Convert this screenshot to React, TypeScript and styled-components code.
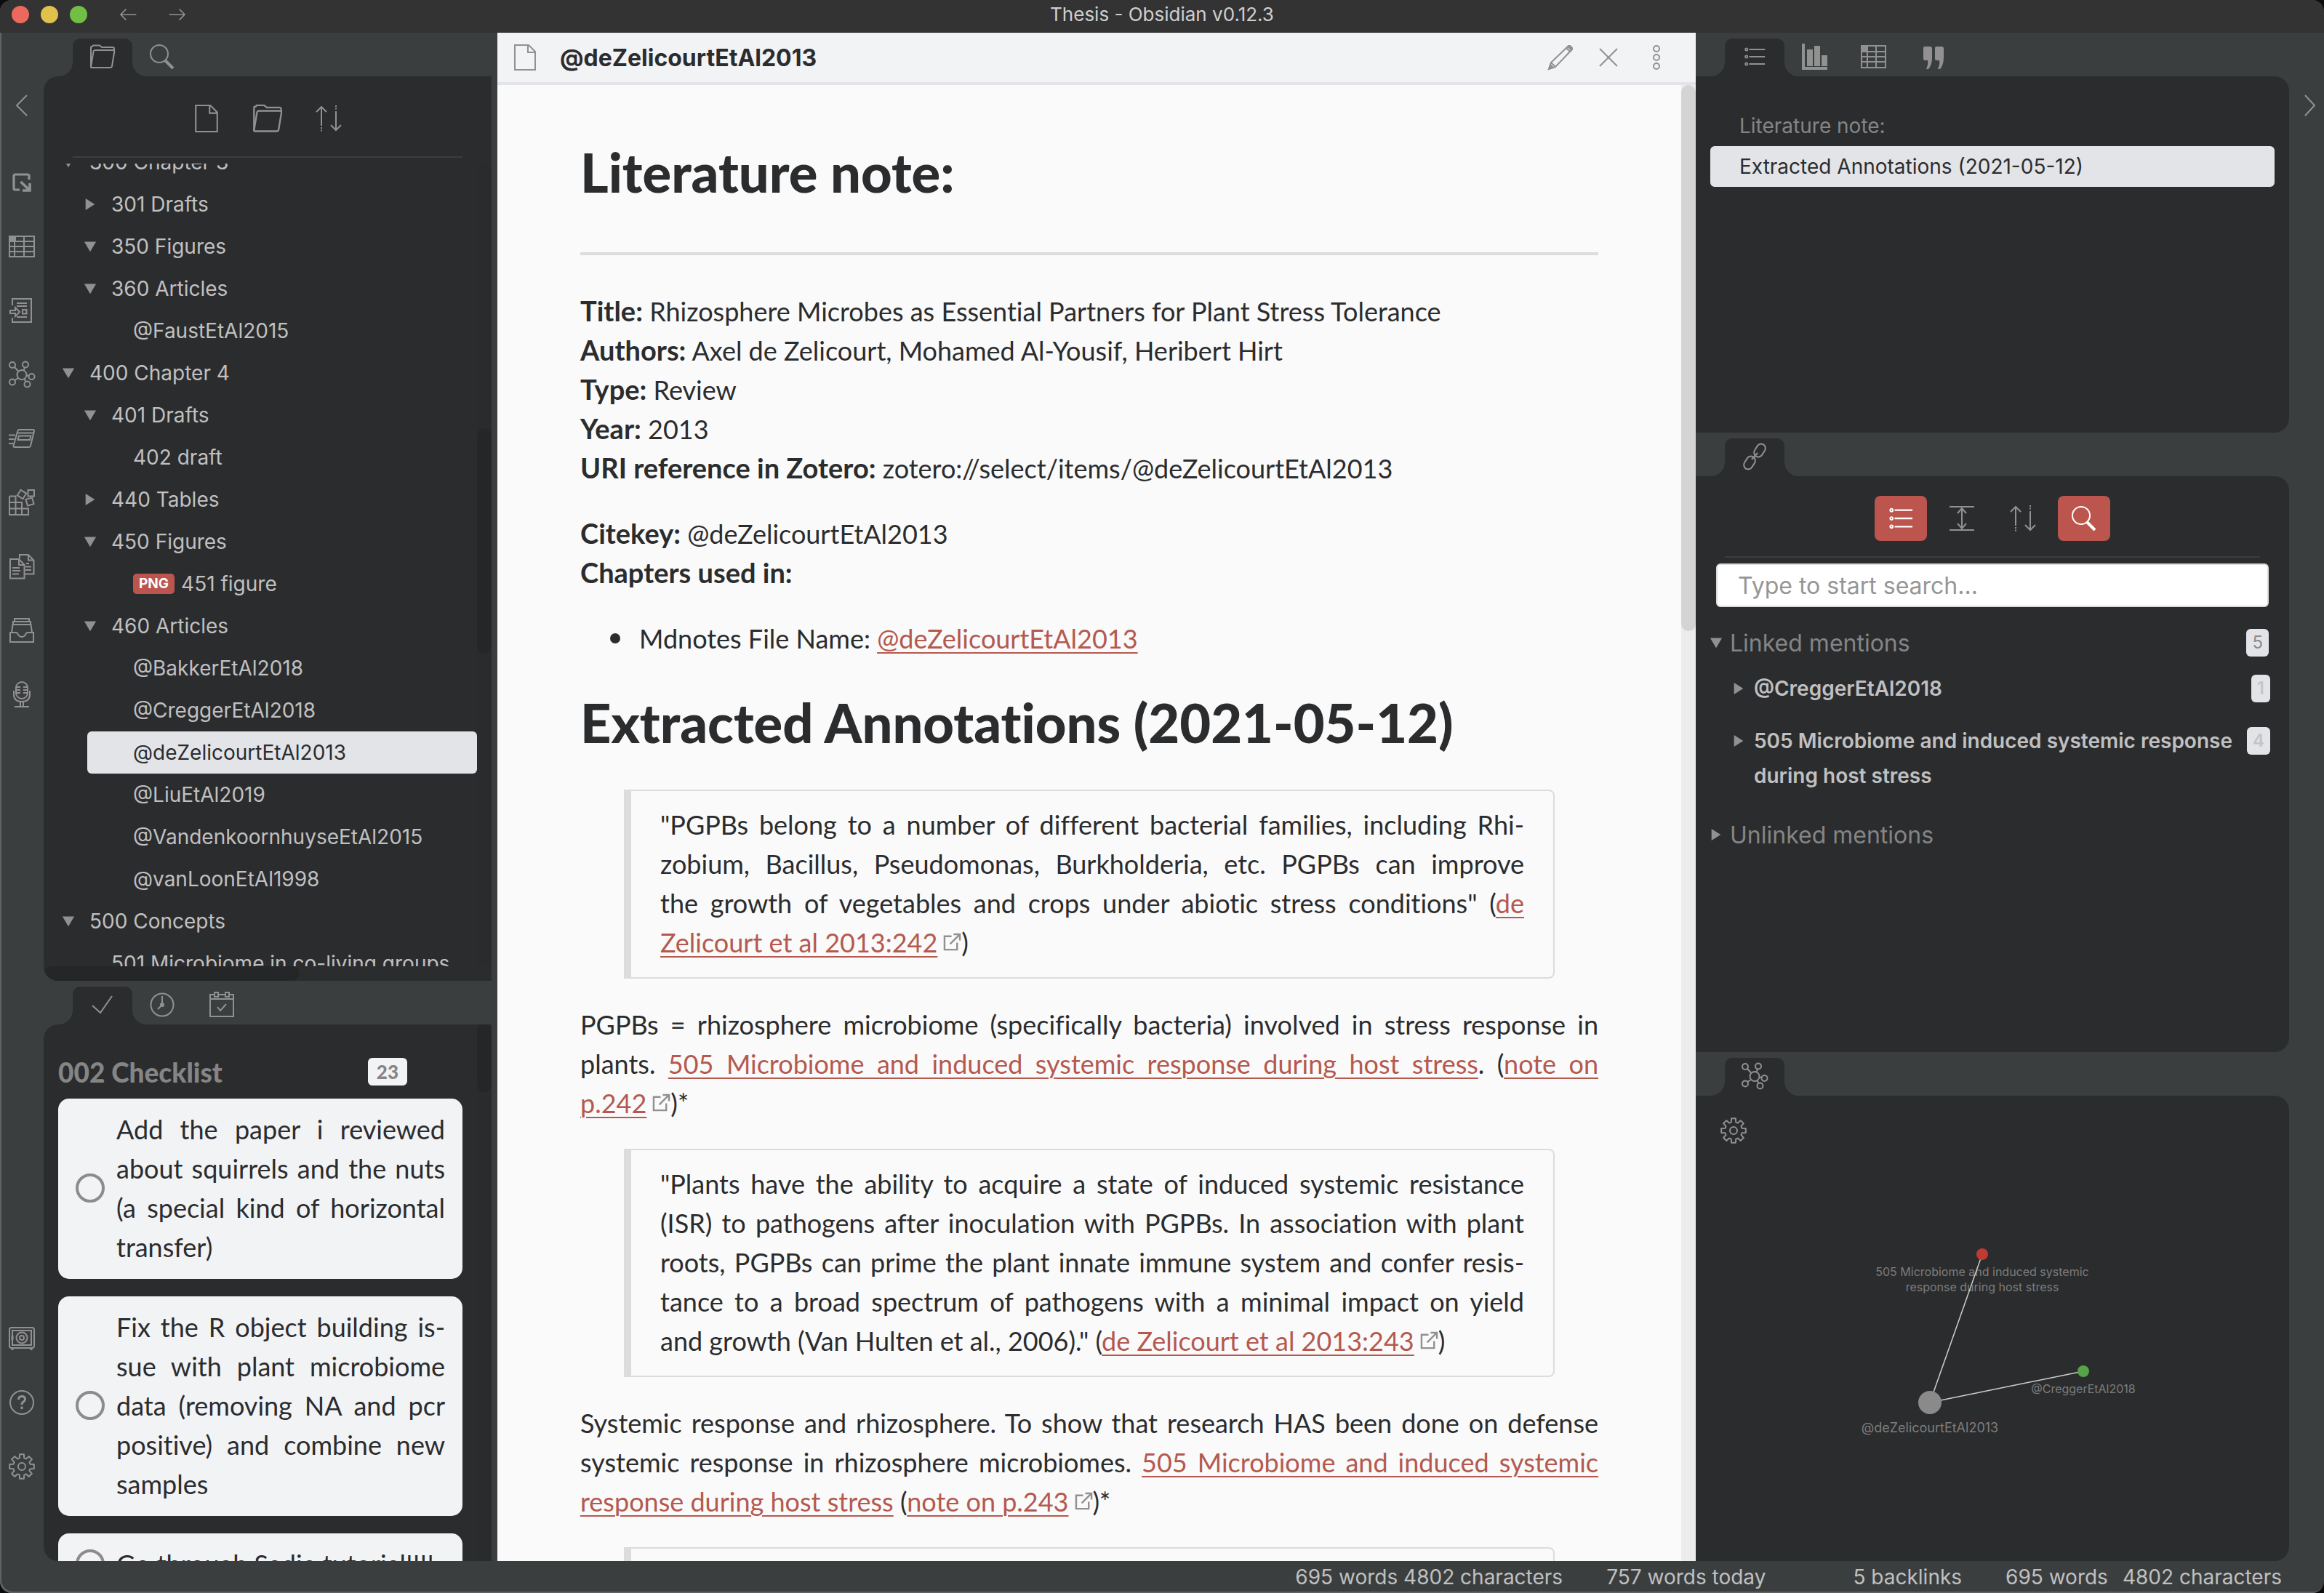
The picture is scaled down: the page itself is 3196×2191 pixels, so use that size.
import React, { useLayoutEffect, useRef } from "react";
import styled, { createGlobalStyle, css } from "styled-components";

const color = {
  title: "#333333",
  frame: "#3b3e3f",
  panel: "#2b2c2e",
  thumb: "#252628",
  rule: "#3c3d3f",
  edge: "#606263",
  icon: "#919191",
  text: "#c0c0c0",
  faint: "#858585",
  light: "#e3e4e8",
  header: "#f2f3f5",
  page: "#fafafa",
  line: "#dcdcdc",
  ink: "#2b2c2e",
  red: "#bb554e",
  link: "#b5594f",
};
const ui = `Inter, "Liberation Sans", sans-serif`;
const prose = `Lato, "Open Sans", sans-serif`;

const GlobalStyle = createGlobalStyle`
  *, *::before, *::after { box-sizing: border-box; }
  html, body, #root { height: 100%; }
  body { margin: 0; background: #0c0c0c; font-family: ${ui}; overflow: hidden; }
  button { border: 0; padding: 0; background: none; font: inherit; color: inherit; cursor: pointer; }
  ul, h1, h2, p, blockquote { margin: 0; padding: 0; }
  ul { list-style: none; }
`;

/* ---------- icons ---------- */

const Glyph = styled.svg<{ $w?: number }>`
  display: block;
  flex: none;
  fill: none;
  stroke: currentColor;
  stroke-width: ${(p) => p.$w ?? 2};
  overflow: visible;
`;

type IconProps = { size?: number };
type ArtProps = IconProps & { w?: number; children: React.ReactNode };
const Art = ({ size = 36, w, children }: ArtProps) => (
  <Glyph width={size} height={size} viewBox="0 0 36 36" $w={w} aria-hidden="true">
    {children}
  </Glyph>
);

const FolderIcon = ({ size }: IconProps) => (
  <Art size={size}>
    <path d="M2 32V5q0-1 1-1h1l1-1.500h9l3 2.500h15q2 0 2 2v3" />
    <path d="M2 32L5.500 11q.5-2 2.500-2h24.500q2 0 1.800 2l-3.300 20q-.5 2-2.500 2H3q-1.200 0-1-1z" />
  </Art>
);
const SearchIcon = ({ size, w }: IconProps & { w?: number }) => (
  <Art size={size} w={w}>
    <circle cx="14" cy="14" r="12" />
    <path d="M22.500 23.500L33 34" strokeWidth="4" />
  </Art>
);
const FileIcon = ({ size }: IconProps) => (
  <Art size={size}>
    <path d="M4 1h19l9 9v25H4zM22 1v10h10" />
  </Art>
);
const SortIcon = ({ size }: IconProps) => (
  <Art size={size}>
    <path d="M8 2v26M1 9l7-7 7 7M28 8v25M21 27l7 7 7-7" />
    <path d="M8 30v6M28 0v7" strokeDasharray="2 1.500" />
  </Art>
);
const ChevronLeft = () => (
  <Art>
    <path d="M25 4L11 18l14 14" />
  </Art>
);
const ChevronRight = () => (
  <Art>
    <path d="M11 4l13 14-13 14" />
  </Art>
);
const ArrowIcon = ({ flip }: { flip?: boolean }) => (
  <Art size={24}>
    <path d={flip ? "M1 18h32M22 7l11 11-11 11" : "M35 18H3M14 7L3 18l11 11"} strokeWidth="2.400" />
  </Art>
);
const SwitchIcon = () => (
  <Art w={3.2}>
    <path d="M28 14V9q0-2-2-2H9Q7 7 7 9v17q0 2 2 2h6" />
    <path d="M16.500 17L29 29M29 19v10H19" strokeWidth="3.600" />
  </Art>
);
const TableIcon = ({ square }: { square?: boolean }) => (
  <Art>
    <path d={square ? "M1 3h33v30H1zM1 11h33M1 18h33M1 25h33M9 3v30M21 3v30" : "M1 4h34v28H1zM1 11h34M1 18h34M1 25h34M8 4v28M21 4v28"} />
    <path d="M1 4h8v7H1z" fill="currentColor" />
  </Art>
);
const ImportIcon = () => (
  <Art>
    <path d="M5 11V2h26v32H5v-6M11 8h14M11 12h14M11 27h14" />
    <path d="M2 18h7v-4l6 6-6 6v-4H2zM19 17h5.500v5.500H19z" />
  </Art>
);
const GraphIcon = () => (
  <Art>
    <circle cx="18" cy="18.500" r="6.500" />
    <circle cx="5" cy="5" r="4" />
    <circle cx="23" cy="4.500" r="4" />
    <circle cx="31.500" cy="21" r="4" />
    <circle cx="25.500" cy="31.500" r="4" />
    <circle cx="5" cy="28.500" r="4" />
    <path d="M8 8l5 5.500M22 8.500l-1.500 4M24.500 19.500l3 .5M21.500 24l2 4M8 26l5-3" />
  </Art>
);
const CardsIcon = () => (
  <Art>
    <path d="M12 9q.5-3 2.500-3h19q2 0 1.500 2l-5 20q-.5 2-2.500 2H8q-2 0-1.500-2zM11.500 10.500h23" />
    <path d="M14 14.500h16.500l-1.500 5.500H12.500zM0 13.500h9M0 19h7.500M0 25h6" />
  </Art>
);
const BlocksIcon = () => (
  <Art>
    <path d="M1 9.500h8.500V35M1 9.500V35h26v-8.500H1M1 18h17v17" />
    <path d="M26.500 1H35v8.500h-8.500z" />
    <rect x="13.500" y="2.500" width="9" height="9" transform="rotate(32 18 7)" />
    <rect x="24.500" y="12.500" width="9" height="9" transform="rotate(-16 29 17)" />
  </Art>
);
const CopyDocsIcon = () => (
  <Art>
    <path d="M2 8h12l7.500 8v18.500H2zM14 8v8h7.500M5 20h10M5 24h11M5 28.500h9" />
    <path d="M15 7V2h12l7.500 8v18.500H22M27 2v7.500h7M24 14h4M23 18.500h8M23 23h8" />
  </Art>
);
const InboxIcon = () => (
  <Art>
    <path d="M2 21h8q2 0 3 3 2 3 5 3t5-3q1-3 3-3h8v13H2z" />
    <path d="M4 21l1.500-11h25L32 21M6 10V6h24v4M8 6V2h20v4" />
  </Art>
);
const MicIcon = () => (
  <Art>
    <rect x="10" y="1" width="16" height="23" rx="8" />
    <path d="M7 13v5q0 10 11 10t11-10v-5M16 28v6M20 28v6M8 35h20M11 8h5M11 12h5M11 16h5M20 8h5M20 12h5M20 16h5" />
  </Art>
);
const SafeIcon = () => (
  <Art>
    <rect x="1" y="3" width="34" height="28" rx="3" />
    <rect x="5" y="7" width="26" height="20" />
    <circle cx="18" cy="17" r="7.500" />
    <circle cx="18" cy="17" r="3" />
    <path d="M5 32v2M31 32v2M5 14v6" strokeWidth="3" />
  </Art>
);
const HelpIcon = () => (
  <Art>
    <circle cx="18" cy="18" r="16" />
    <path d="M13.500 14q0-4.500 4.500-4.500t4.500 4q0 2-2.300 3.500T18 21M18 23.500v3.500" strokeWidth="3" />
  </Art>
);
const gearPath = (() => {
  const pts: string[] = [];
  for (let i = 0; i < 8; i++) {
    const a = (i * Math.PI) / 4;
    [[-0.27, 12], [-0.17, 17], [0.17, 17], [0.27, 12]].forEach(([d, r]) =>
      pts.push(`${(18 + r * Math.sin(a + d)).toFixed(1)} ${(18 - r * Math.cos(a + d)).toFixed(1)}`)
    );
  }
  return `M${pts.join("L")}Z`;
})();
const GearIcon = () => (
  <Art>
    <path d={gearPath} strokeLinejoin="round" />
    <circle cx="18" cy="18" r="5" />
  </Art>
);
const CheckIcon = () => (
  <Art>
    <path d="M4 19l11 10L31 6" />
  </Art>
);
const ClockIcon = () => (
  <Art>
    <circle cx="18" cy="18" r="15.500" />
    <path d="M18 6v12l-6 6" />
    <circle cx="18" cy="18" r="2" fill="currentColor" />
  </Art>
);
const CalendarIcon = () => (
  <Art>
    <path d="M8 4H2v30h32V4h-6M14 4h8M2 10h32M12 21l4 5 8-9" />
    <path d="M8 1h5v6H8zM23 1h5v6h-5z" />
  </Art>
);
const ListIcon = ({ size }: IconProps) => (
  <Art size={size}>
    <circle cx="4.500" cy="6" r="2" />
    <circle cx="4.500" cy="18" r="2" />
    <circle cx="4.500" cy="30" r="2" />
    <path d="M9 6h26M9 18h26M9 30h26" strokeWidth="2.500" />
  </Art>
);
const ChartIcon = () => (
  <Art w={4}>
    <path d="M3 0v34h33" />
    <path d="M8 8h8v23H8zM18 3h8v28h-8zM28 16h8v15h-8z" fill="currentColor" stroke="none" />
  </Art>
);
const QuoteIcon = () => (
  <Art>
    <path d="M6 4h7q3 0 3 3v12q0 10-5 16H8q3-7 2-12H6q-2 0-2-2V6q0-2 2-2zM22 4h7q3 0 3 3v12q0 10-5 16h-3q3-7 2-12h-4q-2 0-2-2V6q0-2 2-2z" fill="currentColor" stroke="none" />
  </Art>
);
const LinkIcon = () => (
  <Art>
    <rect x="19" y="0" width="12" height="19" rx="6" transform="rotate(32 25 9.500)" />
    <rect x="5" y="17" width="12" height="19" rx="6" transform="rotate(32 11 26.500)" />
    <path d="M14 22l8-9" />
  </Art>
);
const ExpandIcon = () => (
  <Art>
    <path d="M1 2h34M1 34h34M18 5v26M12 11l6-7 6 7M12 25l6 7 6-7" />
  </Art>
);
const PencilIcon = () => (
  <Art>
    <path d="M2 34l3-9L28 3q2-2 4 0l1 1q2 2 0 4L11 31zM26 5l5 5M5 25l6 6" />
    <path d="M2 34l2-6 4 4zM28 3q2-2 4 0l1 1q2 2 0 4z" fill="currentColor" />
  </Art>
);
const CloseIcon = () => (
  <Art>
    <path d="M6 6l24 24M30 6L6 30" />
  </Art>
);
const DotsIcon = () => (
  <Art>
    <circle cx="18" cy="6" r="4" />
    <circle cx="18" cy="18" r="4" />
    <circle cx="18" cy="30" r="4" />
  </Art>
);

/* ---------- window frame ---------- */

const Window = styled.div`
  height: 100vh;
  display: flex;
  flex-direction: column;
  background: ${color.frame};
  border-radius: 16px;
  overflow: hidden;
  box-shadow: inset 2px -2px 0 ${color.edge};
`;
const TitleBar = styled.header`
  flex: none;
  height: 45px;
  padding: 0 16px 6px;
  display: grid;
  grid-template-columns: 1fr auto 1fr;
  align-items: center;
  background: ${color.title};
  color: #cfcfcf;
  font-size: 26px;
`;
const TitleControls = styled.div`
  display: flex;
  align-items: center;
  gap: 16px;
  color: ${color.icon};
`;
const Light = styled.button<{ $c: string }>`
  width: 24px;
  height: 24px;
  border-radius: 50%;
  background: ${(p) => p.$c};
`;
const NavArrow = styled.button`
  margin-left: 28px;
`;
const Body = styled.div`
  flex: 1;
  min-height: 0;
  display: flex;
`;
const Ribbon = styled.nav<{ $side: "left" | "right" }>`
  flex: none;
  width: ${(p) => (p.$side === "left" ? 60 : 48)}px;
  padding: ${(p) => (p.$side === "left" ? "82px 0 112px" : "82px 0 0 9px")};
  display: flex;
  flex-direction: column;
  align-items: center;
  gap: 52px;
  color: ${color.icon};
`;
const RibbonFirst = styled.button`
  margin-bottom: 18px;
`;
const RibbonBottom = styled.button`
  margin-top: auto;
`;

/* ---------- side panels ---------- */

const Side = styled.aside<{ $width: number }>`
  flex: none;
  width: ${(p) => p.$width}px;
  display: flex;
  flex-direction: column;
  min-height: 0;
`;
const Split = styled.section<{ $grow: number }>`
  flex: ${(p) => p.$grow} 1 0;
  min-height: 0;
  display: flex;
  flex-direction: column;
`;
const TabStrip = styled.div`
  flex: none;
  height: 60px;
  padding: 8px 40px 0;
  display: flex;
  color: ${color.icon};
`;
const Tab = styled.button<{ $active?: boolean }>`
  position: relative;
  width: 82px;
  height: 52px;
  padding-bottom: 2px;
  display: flex;
  align-items: center;
  justify-content: center;
  ${(p) =>
    p.$active &&
    css`
      background: ${color.panel};
      border-radius: 10px 10px 0 0;
      &::before,
      &::after {
        content: "";
        position: absolute;
        bottom: 0;
        width: 20px;
        height: 20px;
      }
      &::before {
        right: 100%;
        background: radial-gradient(circle at 0 0, transparent 20px, ${color.panel} 20px);
      }
      &::after {
        left: 100%;
        background: radial-gradient(circle at 100% 0, transparent 20px, ${color.panel} 20px);
      }
    `}
`;
const Panel = styled.div<{ $round: "left" | "right" }>`
  position: relative;
  flex: 1;
  min-height: 0;
  display: flex;
  flex-direction: column;
  overflow: hidden;
  background: ${color.panel};
  border-radius: ${(p) => (p.$round === "left" ? "20px 0 0 20px" : "0 20px 20px 0")};
`;
const NavHeader = styled.div`
  flex: none;
  margin: 0 40px 8px;
  padding: 27px 0 21px;
  display: flex;
  justify-content: center;
  gap: 12px;
  border-bottom: 2px solid ${color.rule};
  color: ${color.icon};
`;
const NavButton = styled.button<{ $on?: boolean }>`
  width: 72px;
  height: 62px;
  display: flex;
  align-items: center;
  justify-content: center;
  border-radius: 8px;
  background: ${(p) => (p.$on ? color.red : "none")};
  color: ${(p) => (p.$on ? "#ffffff" : "inherit")};
`;
const ScrollArea = styled.div`
  flex: 1;
  min-height: 0;
  display: grid;
  grid-template-columns: minmax(0, 1fr) 20px;
  grid-template-rows: minmax(0, 1fr);
`;
const Track = styled.div<{ $bg?: string }>`
  background: ${(p) => p.$bg ?? "#2a2b2d"};
`;
const Thumb = styled.div<{ $bg?: string; $before: number; $size: number }>`
  height: ${(p) => p.$size}%;
  transform: translateY(${(p) => (p.$before / p.$size) * 100}%);
  border-radius: 10px;
  background: ${(p) => p.$bg ?? color.thumb};
`;
const HTrack = styled.div`
  flex: none;
  height: 20px;
  margin-right: 20px;
`;
const HThumb = styled.div`
  width: 59%;
  height: 20px;
  border-radius: 10px;
  background: ${color.thumb};
`;

/* ---------- file tree ---------- */

const Tree = styled.ul`
  overflow: hidden;
  min-height: 0;
`;
const TreeRow = styled.li<{ $level: number; $selected?: boolean }>`
  height: 58px;
  margin-left: ${(p) => p.$level * 30}px;
  padding-left: 25px;
  display: flex;
  align-items: center;
  border-radius: 6px;
  font-size: 28px;
  white-space: nowrap;
  background: ${(p) => (p.$selected ? color.light : "none")};
  color: ${(p) => (p.$selected ? color.ink : color.text)};
`;
const Caret = styled.span<{ $open?: boolean; $hidden?: boolean }>`
  flex: none;
  width: 18px;
  height: 16px;
  margin-right: 20px;
  visibility: ${(p) => (p.$hidden ? "hidden" : "visible")};
  background: ${color.icon};
  clip-path: ${(p) => (p.$open ? "polygon(5% 10%, 95% 10%, 50% 95%)" : "polygon(15% 0, 85% 50%, 15% 100%)")};
`;
const FileTag = styled.span`
  height: 28px;
  margin-right: 9px;
  padding: 0 8px;
  border-radius: 5px;
  background: ${color.red};
  color: #ffffff;
  font-size: 19px;
  font-weight: 700;
  line-height: 28px;
`;

type Row = { text: string; level: number; kind: "open" | "closed" | "file"; tag?: string; selected?: boolean };
const files: Row[] = [
  { text: "300 Chapter 3", level: 0, kind: "open" },
  { text: "301 Drafts", level: 1, kind: "closed" },
  { text: "350 Figures", level: 1, kind: "open" },
  { text: "360 Articles", level: 1, kind: "open" },
  { text: "@FaustEtAl2015", level: 2, kind: "file" },
  { text: "400 Chapter 4", level: 0, kind: "open" },
  { text: "401 Drafts", level: 1, kind: "open" },
  { text: "402 draft", level: 2, kind: "file" },
  { text: "440 Tables", level: 1, kind: "closed" },
  { text: "450 Figures", level: 1, kind: "open" },
  { text: "451 figure", level: 2, kind: "file", tag: "PNG" },
  { text: "460 Articles", level: 1, kind: "open" },
  { text: "@BakkerEtAl2018", level: 2, kind: "file" },
  { text: "@CreggerEtAl2018", level: 2, kind: "file" },
  { text: "@deZelicourtEtAl2013", level: 2, kind: "file", selected: true },
  { text: "@LiuEtAl2019", level: 2, kind: "file" },
  { text: "@VandenkoornhuyseEtAl2015", level: 2, kind: "file" },
  { text: "@vanLoonEtAl1998", level: 2, kind: "file" },
  { text: "500 Concepts", level: 0, kind: "open" },
  { text: "501 Microbiome in co-living groups", level: 1, kind: "file" },
];

const TreeEnd = styled.li`
  height: 58px;
`;

function FileTree() {
  const ref = useRef<HTMLUListElement>(null);
  useLayoutEffect(() => {
    if (ref.current) ref.current.scrollTop = 31;
  }, []);
  return (
    <Tree ref={ref}>
      {files.map((f) => (
        <TreeRow key={f.text} $level={f.level} $selected={f.selected}>
          <Caret $open={f.kind === "open"} $hidden={f.kind === "file"} />
          {f.tag && <FileTag>{f.tag}</FileTag>}
          {f.text}
        </TreeRow>
      ))}
      <TreeEnd />
    </Tree>
  );
}

/* ---------- checklist ---------- */

const Checklist = styled.div`
  min-height: 0;
  overflow: hidden;
  padding: 38px 20px 0;
  font-family: ${prose};
  font-variant-ligatures: none;
`;
const ChecklistHead = styled.div`
  display: flex;
  align-items: center;
  justify-content: space-between;
  height: 54px;
  margin-bottom: 10px;
  padding-right: 76px;
  color: ${color.faint};
`;
const ChecklistTitle = styled.h2`
  font-size: 37px;
  font-weight: 900;
`;
const Count = styled.span`
  height: 38px;
  padding: 0 12px;
  border-radius: 6px;
  background: ${color.header};
  font-size: 26px;
  font-weight: 900;
  line-height: 38px;
`;
const Card = styled.label`
  display: flex;
  align-items: center;
  gap: 16px;
  margin-bottom: 24px;
  padding: 15px 24px 17px;
  border-radius: 15px;
  background: ${color.header};
  color: ${color.ink};
  font-size: 36px;
  line-height: 54px;
  text-align: justify;
`;
const Tick = styled.input`
  appearance: none;
  flex: none;
  width: 40px;
  height: 40px;
  margin: 0;
  border: 4px solid #8c8c8c;
  border-radius: 50%;
`;

const todos = [
  "Add the paper i reviewed about squirrels and the nuts (a special kind of horizontal transfer)",
  "Fix the R object building is\u00ADsue with plant microbiome data (removing NA and pcr positive) and combine new samples",
  "Go through Sadie tutorial!!!!",
];

/* ---------- note ---------- */

const Note = styled.main`
  flex: 1;
  min-width: 0;
  display: flex;
  flex-direction: column;
  margin-left: 8px;
  background: ${color.page};
`;
const NoteHeader = styled.div`
  flex: none;
  height: 72px;
  padding: 0 36px 0 20px;
  display: flex;
  align-items: center;
  border-bottom: 4px solid ${color.light};
  background: ${color.header};
  color: ${color.icon};
`;
const NoteName = styled.div`
  flex: 1;
  margin-left: 30px;
  color: ${color.ink};
  font-size: 32px;
  font-weight: 650;
`;
const NoteActions = styled.div`
  display: flex;
  gap: 30px;
`;
const Sheet = styled.article`
  min-height: 0;
  overflow: hidden;
  padding: 80px 114px 0;
  color: ${color.ink};
  font-family: ${prose};
  font-size: 36px;
  font-variant-ligatures: none;
  line-height: 54px;
  b {
    font-size: 38px;
    line-height: 1;
  }
`;
const Heading = styled.h1`
  font-size: 74px;
  font-weight: 900;
  line-height: 80px;
`;
const Rule = styled.hr`
  height: 4px;
  margin: 70px 0 50px;
  border: 0;
  background: ${color.line};
`;
const Para = styled.p`
  margin-bottom: 36px;
  text-align: justify;
`;
const Bullets = styled.ul`
  margin-bottom: 49px;
  padding-left: 41px;
`;
const Bullet = styled.li`
  display: flex;
  align-items: center;
  &::before {
    content: "";
    width: 14px;
    height: 14px;
    margin-right: 26px;
    border-radius: 50%;
    background: currentColor;
  }
`;
const Quote = styled.blockquote`
  margin: 52px 60px 36px;
  padding: 19px 40px 21px;
  border: 2px solid ${color.line};
  border-left-width: 10px;
  border-radius: 0 8px 8px 0;
  text-align: justify;
  ${Para} + & {
    margin-top: 0;
  }
`;
const Anchor = styled.a`
  color: ${color.link};
  text-decoration: underline;
  text-decoration-thickness: 2px;
  text-underline-offset: 5px;
`;
const OutGlyph = styled.svg`
  width: 25px;
  height: 25px;
  margin-left: 8px;
  vertical-align: 2px;
  fill: none;
  stroke: ${color.icon};
  stroke-width: 2.5;
`;
const Out = ({ children }: { children: React.ReactNode }) => (
  <>
    <Anchor href="#">{children}</Anchor>
    <OutGlyph viewBox="0 0 26 26" aria-hidden="true">
      <path d="M12 5H2v19h18V14M10 16L23 3M15 2h9v9" />
    </OutGlyph>
  </>
);

/* ---------- right side ---------- */

const Outline = styled.ul`
  padding: 40px 20px;
  font-size: 28px;
`;
const OutlineItem = styled.li<{ $selected?: boolean }>`
  height: 56px;
  padding-left: 40px;
  border-radius: 6px;
  line-height: 56px;
  background: ${(p) => (p.$selected ? color.light : "none")};
  color: ${(p) => (p.$selected ? color.ink : color.faint)};
`;
const SearchBox = styled.input`
  height: 60px;
  margin: 0 28px 22px;
  padding: 0 28px;
  border: 2px solid ${color.line};
  border-radius: 6px;
  background: #ffffff;
  font: 32px ${ui};
  &::placeholder {
    color: #969696;
    opacity: 1;
  }
`;
const MentionHead = styled.div`
  display: flex;
  align-items: center;
  height: 54px;
  padding: 0 28px 0 19px;
  color: ${color.faint};
  font-size: 32px;
  & > ${Caret} {
    margin-right: 10px;
  }
`;
const Mentions = styled.ul`
  margin-bottom: 18px;
`;
const Mention = styled.li`
  display: flex;
  align-items: flex-start;
  gap: 12px;
  padding: 12px 26px 12px 50px;
  color: ${color.text};
  font-size: 28px;
  font-weight: 600;
  line-height: 48px;
  & > ${Caret} {
    margin: 16px 0 0;
  }
`;
const Grow = styled.span`
  flex: 1;
`;
const Badge = styled.span<{ $pale?: boolean }>`
  flex: none;
  height: 38px;
  padding: 0 8px;
  border-radius: 6px;
  background: ${color.light};
  color: ${(p) => (p.$pale ? "#c4c4c4" : "#8c8c8c")};
  font-size: 24px;
  font-weight: ${(p) => (p.$pale ? 600 : 400)};
  line-height: 38px;
  ${Mention} & {
    margin-top: 5px;
  }
`;
const GraphSettings = styled.button`
  position: absolute;
  top: 30px;
  left: 34px;
  color: ${color.icon};
`;
const GraphCanvas = styled.svg`
  width: 100%;
  height: 100%;
  font-family: ${ui};
  text-anchor: middle;
`;

/* ---------- status bar ---------- */

const Status = styled.footer`
  flex: none;
  height: 44px;
  padding-right: 58px;
  display: flex;
  align-items: center;
  justify-content: flex-end;
  color: ${color.text};
  font-size: 28px;
`;
const StatusItem = styled.span<{ $lead: number }>`
  margin-left: ${(p) => p.$lead}px;
`;

export default function App() {
  return (
    <Window>
      <GlobalStyle />
      <TitleBar>
        <TitleControls>
          <Light $c="#ed695e" aria-label="Close window" />
          <Light $c="#e0c14c" aria-label="Minimize window" />
          <Light $c="#71c045" aria-label="Zoom window" />
          <NavArrow aria-label="Back"><ArrowIcon /></NavArrow>
          <NavArrow aria-label="Forward"><ArrowIcon flip /></NavArrow>
        </TitleControls>
        <span>Thesis - Obsidian v0.12.3</span>
      </TitleBar>

      <Body>
        <Ribbon $side="left">
          <RibbonFirst aria-label="Collapse left"><ChevronLeft /></RibbonFirst>
          <button aria-label="Quick switcher"><SwitchIcon /></button>
          <button aria-label="Table"><TableIcon /></button>
          <button aria-label="Import note"><ImportIcon /></button>
          <button aria-label="Graph view"><GraphIcon /></button>
          <button aria-label="Flashcards"><CardsIcon /></button>
          <button aria-label="Blocks"><BlocksIcon /></button>
          <button aria-label="Templates"><CopyDocsIcon /></button>
          <button aria-label="Review"><InboxIcon /></button>
          <button aria-label="Record audio"><MicIcon /></button>
          <RibbonBottom aria-label="Open vault"><SafeIcon /></RibbonBottom>
          <button aria-label="Help"><HelpIcon /></button>
          <button aria-label="Settings"><GearIcon /></button>
        </Ribbon>

        <Side $width={616}>
          <Split $grow={1304}>
            <TabStrip>
              <Tab $active aria-label="Files"><FolderIcon /></Tab>
              <Tab aria-label="Search"><SearchIcon /></Tab>
            </TabStrip>
            <Panel $round="left">
              <NavHeader>
                <NavButton aria-label="New note"><FileIcon size={38} /></NavButton>
                <NavButton aria-label="New folder"><FolderIcon size={42} /></NavButton>
                <NavButton aria-label="Sort order"><SortIcon size={36} /></NavButton>
              </NavHeader>
              <ScrollArea>
                <FileTree />
                <Track><Thumb $before={33} $size={28} /></Track>
              </ScrollArea>
              <HTrack><HThumb /></HTrack>
            </Panel>
          </Split>
          <Split $grow={798}>
            <TabStrip>
              <Tab $active aria-label="Checklist"><CheckIcon /></Tab>
              <Tab aria-label="Recent"><ClockIcon /></Tab>
              <Tab aria-label="Calendar"><CalendarIcon /></Tab>
            </TabStrip>
            <Panel $round="left">
              <ScrollArea>
                <Checklist>
                  <ChecklistHead>
                    <ChecklistTitle>002 Checklist</ChecklistTitle>
                    <Count>23</Count>
                  </ChecklistHead>
                  {todos.map((t) => (
                    <Card key={t}>
                      <Tick type="checkbox" />
                      <Grow>{t}</Grow>
                    </Card>
                  ))}
                </Checklist>
                <Track><Thumb $before={0} $size={12.6} /></Track>
              </ScrollArea>
            </Panel>
          </Split>
        </Side>

        <Note>
          <NoteHeader>
            <FileIcon size={36} />
            <NoteName>@deZelicourtEtAl2013</NoteName>
            <NoteActions>
              <button aria-label="Edit"><PencilIcon /></button>
              <button aria-label="Close"><CloseIcon /></button>
              <button aria-label="More options"><DotsIcon /></button>
            </NoteActions>
          </NoteHeader>
          <ScrollArea>
            <Sheet>
              <Heading>Literature note:</Heading>
              <Rule />
              <Para>
                <b>Title:</b> Rhizosphere Microbes as Essential Partners for Plant Stress Tolerance<br />
                <b>Authors:</b> Axel de Zelicourt, Mohamed Al-Yousif, Heribert Hirt<br />
                <b>Type:</b> Review<br />
                <b>Year:</b> 2013<br />
                <b>URI reference in Zotero:</b> zotero://select/items/@deZelicourtEtAl2013
              </Para>
              <Para>
                <b>Citekey:</b> @deZelicourtEtAl2013<br />
                <b>Chapters used in:</b>
              </Para>
              <Bullets>
                <Bullet>
                  <span>Mdnotes File Name: <Anchor href="#">@deZelicourtEtAl2013</Anchor></span>
                </Bullet>
              </Bullets>
              <Heading>Extracted Annotations (2021-05-12)</Heading>
              <Quote>
                "PGPBs belong to a number of different bacterial families, including Rhi&shy;zobium, Bacillus,
                Pseudomonas, Burkholderia, etc. PGPBs can improve the&nbsp;growth of vegetables and crops under
                abiotic stress conditions" (<Out>de Zelicourt et al 2013:242</Out>)
              </Quote>
              <Para>
                PGPBs = rhizosphere microbiome (specifically bacteria) involved in stress response in plants.{" "}
                <Anchor href="#">505 Microbiome and induced systemic response during host stress</Anchor>. (
                <Out>note on p.242</Out>)*
              </Para>
              <Quote>
                "Plants have the ability to acquire a state of induced systemic resistance (ISR) to pathogens after
                inoculation with PGPBs. In association with plant roots, PGPBs can prime the plant innate immune
                system and confer resis&shy;tance to a broad spectrum of pathogens with a minimal impact on yield
                and&nbsp;growth (Van Hulten et al., 2006)." (<Out>de Zelicourt et al 2013:243</Out>)
              </Quote>
              <Para>
                Systemic response and rhizosphere. To show that research HAS been done on defense systemic response
                in rhizosphere microbiomes.{" "}
                <Anchor href="#">505 Microbiome and induced systemic response during host stress</Anchor> (
                <Out>note on p.243</Out>)*
              </Para>
              <Quote />
            </Sheet>
            <Track $bg="#ececec"><Thumb $bg="#d4d4d4" $before={0} $size={37} /></Track>
          </ScrollArea>
        </Note>

        <Side $width={816}>
          <Split $grow={550}>
            <TabStrip>
              <Tab $active aria-label="Outline"><ListIcon size={30} /></Tab>
              <Tab aria-label="Statistics"><ChartIcon /></Tab>
              <Tab aria-label="Tables"><TableIcon square /></Tab>
              <Tab aria-label="Citations"><QuoteIcon /></Tab>
            </TabStrip>
            <Panel $round="right">
              <Outline>
                <OutlineItem>Literature note:</OutlineItem>
                <OutlineItem $selected>Extracted Annotations (2021-05-12)</OutlineItem>
              </Outline>
            </Panel>
          </Split>
          <Split $grow={852}>
            <TabStrip>
              <Tab $active aria-label="Backlinks"><LinkIcon /></Tab>
            </TabStrip>
            <Panel $round="right">
              <NavHeader>
                <NavButton $on aria-label="Collapse results"><ListIcon size={34} /></NavButton>
                <NavButton aria-label="Show more context"><ExpandIcon /></NavButton>
                <NavButton aria-label="Sort order"><SortIcon /></NavButton>
                <NavButton $on aria-label="Show search filter"><SearchIcon /></NavButton>
              </NavHeader>
              <SearchBox type="text" aria-label="Search backlinks" placeholder="Type to start search..." />
              <MentionHead>
                <Caret $open />
                <Grow>Linked mentions</Grow>
                <Badge>5</Badge>
              </MentionHead>
              <Mentions>
                <Mention>
                  <Caret />
                  <Grow>@CreggerEtAl2018</Grow>
                  <Badge $pale>1</Badge>
                </Mention>
                <Mention>
                  <Caret />
                  <Grow>505 Microbiome and induced systemic response during host stress</Grow>
                  <Badge $pale>4</Badge>
                </Mention>
              </Mentions>
              <MentionHead>
                <Caret />
                <Grow>Unlinked mentions</Grow>
              </MentionHead>
            </Panel>
          </Split>
          <Split $grow={700}>
            <TabStrip>
              <Tab $active aria-label="Local graph"><GraphIcon /></Tab>
            </TabStrip>
            <Panel $round="right">
              <GraphCanvas viewBox="0 0 816 640">
                <g fill="#7d7d7d" fontSize="16">
                  <text x="394" y="248">505 Microbiome and induced systemic</text>
                  <text x="394" y="269">response during host stress</text>
                  <text x="533" y="409">@CreggerEtAl2018</text>
                  <text x="322" y="463" fontSize="18">@deZelicourtEtAl2013</text>
                </g>
                <path d="M394 218L322 422L533 379" fill="none" stroke="#cfcfcf" strokeWidth="1.500" />
                <circle cx="394" cy="218" r="8" fill="#c03a32" />
                <circle cx="533" cy="379" r="8" fill="#57a349" />
                <circle cx="322" cy="422" r="16" fill="#8a8a8a" />
              </GraphCanvas>
              <GraphSettings aria-label="Graph settings"><GearIcon /></GraphSettings>
            </Panel>
          </Split>
        </Side>

        <Ribbon $side="right">
          <button aria-label="Collapse right"><ChevronRight /></button>
        </Ribbon>
      </Body>

      <Status>
        <StatusItem $lead={0}>695 words 4802 characters</StatusItem>
        <StatusItem $lead={60}>757 words today</StatusItem>
        <StatusItem $lead={120}>5 backlinks</StatusItem>
        <StatusItem $lead={60}>695 words</StatusItem>
        <StatusItem $lead={20}>4802 characters</StatusItem>
      </Status>
    </Window>
  );
}
